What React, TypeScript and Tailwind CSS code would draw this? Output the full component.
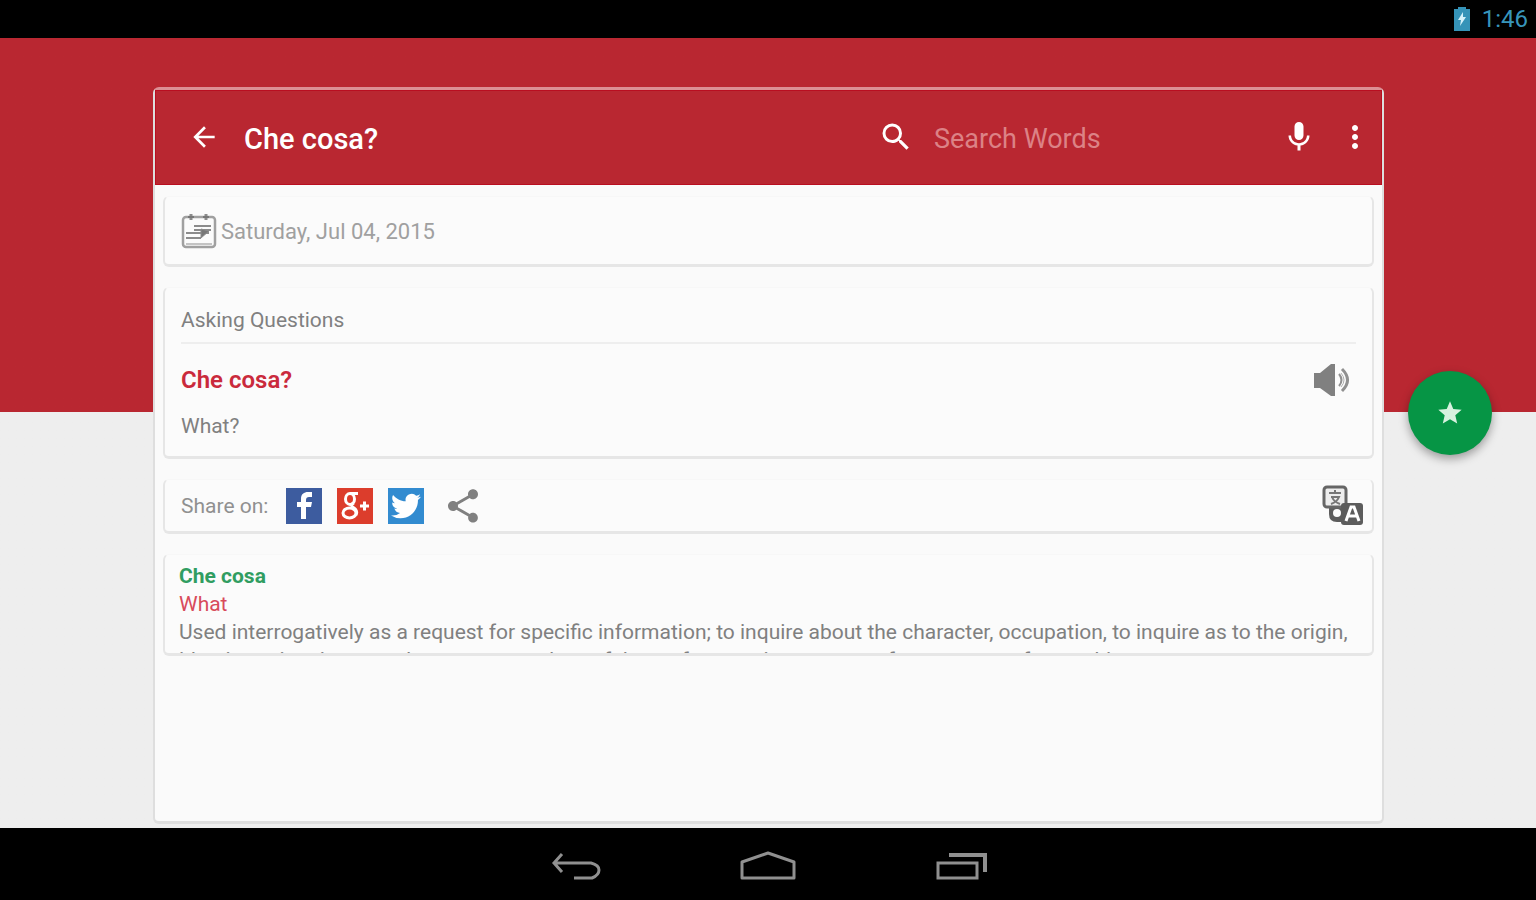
import React, { useState } from "react";
import { MdArrowBack, MdMic, MdMoreVert, MdSearch, MdShare, MdStar } from "react-icons/md";
import clsx from "clsx";

interface CardProps {
    className?: string;
    children: React.ReactNode;
}

function Card({ className, children }: CardProps) {
    return (
        <section
            className={clsx(
                "rounded-md border-x-2 border-b-3 border-[#e6e6e6] border-t border-t-[#f7f7f7] bg-[#fbfbfb]",
                className
            )}
        >
            {children}
        </section>
    );
}

function StatusBar() {
    return (
        <div className="flex h-[38px] shrink-0 items-center justify-end gap-3 bg-black pr-2">
            <svg viewBox="0 0 16 24" className="h-6 w-4">
                <path d="M4 0h8v2h4v22H0V2h4z" fill="#3593b8" />
                <path d="M9 5 4 13h3l-1 6 6-9H9z" fill="#d5f2fb" />
            </svg>
            <span className="text-2xl leading-6 text-[#3795bb]">1:46</span>
        </div>
    );
}

function CalendarIcon() {
    return (
        <svg viewBox="0 0 36 36" className="size-9" fill="none" stroke="#8b8b8b">
            <rect x="2" y="4" width="32" height="30" rx="3" strokeWidth="2.5" stroke="#a0a0a0" />
            <path d="M5 31h26" strokeWidth="2" stroke="#c4c4c4" />
            <path d="M10 1v6M25 1v6" strokeWidth="3" />
            <path d="M7 4h6M22 4h6" strokeWidth="2" stroke="#777" />
            <path d="M13 13h17M13 17h17M5 20h23M5 25h15" strokeWidth="2" />
            <path d="M20 16v9l8-7z" fill="#777" strokeWidth="1" />
        </svg>
    );
}

function SpeakerIcon() {
    return (
        <svg viewBox="0 0 38 34" className="h-[34px] w-[38px]" fill="none">
            <path d="M0 10h6L17 1h4v32h-4L6 25H0z" fill="#808080" />
            <path d="M25 11q5 6 0 12" stroke="#909090" strokeWidth="2" />
            <path d="M28 6q11 11 0 22" stroke="#909090" strokeWidth="3" />
            <path d="M27 10q6 7 0 14" stroke="#b0b0b0" strokeWidth="1" />
        </svg>
    );
}

function TranslateIcon() {
    return (
        <svg viewBox="0 0 42 42" className="size-[42px]" fill="none">
            <path d="M7 22v7q0 8 8 8h6V24h3v-2z" fill="#5c5c5c" />
            <circle cx="15" cy="28" r="4" fill="#fbfbfb" />
            <rect x="2" y="2" width="22" height="20" rx="3" fill="#ededed" stroke="#666" strokeWidth="3" />
            <path d="M7 8h12M13 5v3M9 12h8q-2 5-8 7M10 12q2 5 8 7" stroke="#777" strokeWidth="2" />
            <rect x="19" y="18" width="22" height="22" rx="3" fill="#5c5c5c" />
            <path d="m24 36 5-14h3l5 14M26 31h9" stroke="#fff" strokeWidth="3" />
        </svg>
    );
}

function FacebookIcon() {
    return (
        <svg viewBox="0 0 36 36" className="size-9">
            <path d="M0 0h36v36H0z" fill="#3d5c9f" />
            <path
                d="M15 31V19h-4v-5h4v-3c0-5 3-7 7-7h4v5h-3c-2 0-3 1-3 3v2h6l-1 5h-5v12z"
                fill="#fff"
            />
        </svg>
    );
}

function GooglePlusIcon() {
    return (
        <svg viewBox="0 0 36 36" className="size-9" fill="none" stroke="#fff">
            <path d="M0 0h36v36H0z" fill="#dc3d2c" stroke="none" />
            <ellipse cx="13" cy="11" rx="4.5" ry="5.5" strokeWidth="3" />
            <path d="M13 5.500h8M17 15q-5 2 0 5 4 3 2 7" strokeWidth="3" />
            <ellipse cx="12.5" cy="25" rx="6.5" ry="5" strokeWidth="3" />
            <path d="M23 18h9M27.500 13.500v9" strokeWidth="3" />
        </svg>
    );
}

function TwitterIcon() {
    return (
        <svg viewBox="0 0 36 36" className="size-9">
            <path d="M0 0h36v36H0z" fill="#328bd0" />
            <path
                transform="translate(3 3) scale(1.25)"
                d="M23.950 4.570a10 10 0 0 1-2.820.770 4.960 4.960 0 0 0 2.160-2.720c-.950.550-2 .960-3.130 1.180a4.920 4.920 0 0 0-8.380 4.480C7.690 8.090 4.070 6.130 1.640 3.160a4.820 4.820 0 0 0-.670 2.480c0 1.710.870 3.210 2.190 4.100a4.900 4.900 0 0 1-2.230-.620v.060a4.920 4.920 0 0 0 3.950 4.830 5 5 0 0 1-2.210.080 4.940 4.940 0 0 0 4.600 3.420A9.870 9.870 0 0 1 0 19.540a14 14 0 0 0 7.560 2.210c9.050 0 14-7.500 14-13.980l-.020-.640a9.940 9.940 0 0 0 2.410-2.560z"
                fill="#fff"
            />
        </svg>
    );
}

function NavBar() {
    return (
        <nav className="flex h-[72px] shrink-0 items-center justify-center gap-[138px] bg-black pt-1">
            <button type="button" aria-label="Back">
                <svg viewBox="0 0 56 32" className="h-8 w-14" fill="none" stroke="#909090" strokeWidth="3">
                    <path d="M16 4 8 13l8 9M8 13h37q8 2 8 7t-7 8H28" />
                </svg>
            </button>
            <button type="button" aria-label="Home">
                <svg viewBox="0 0 56 32" className="h-8 w-14" fill="none" stroke="#909090" strokeWidth="3">
                    <path d="M2 28V12L28 3l26 9v16z" strokeLinejoin="round" />
                </svg>
            </button>
            <button type="button" aria-label="Recent apps">
                <svg viewBox="0 0 56 32" className="h-8 w-14" fill="none" stroke="#909090" strokeWidth="4">
                    <path d="M4 13h39v15H4z" strokeWidth="3" />
                    <path d="M15 5h36v17" />
                </svg>
            </button>
        </nav>
    );
}

export default function App() {
    const [query, setQuery] = useState("");

    return (
        <div className="flex min-h-screen flex-col bg-black font-[Roboto,sans-serif] text-[#808080]">
            <StatusBar />
            <main className="grid flex-1 grid-cols-[153fr_1231fr_152fr] bg-linear-to-b from-[#b92731] from-[374px] to-[#eeeeee] to-[374px] pt-[49px] pb-1">
                <div />
                <article className="flex flex-col rounded-md border-2 border-t-3 border-b-3 border-[#dedede] border-t-[#dc8f94] bg-[#fafafa]">
                    <header className="flex h-[95px] items-center border border-[#b90e20] bg-[#b92731] pr-2 pb-0.5 pl-8 text-white">
                        <button type="button" aria-label="Navigate up">
                            <MdArrowBack className="size-8" />
                        </button>
                        <h1 className="ml-6 flex-1 pt-1 text-[29px] leading-9 font-medium">Che cosa?</h1>
                        <label htmlFor="search" aria-label="Search" className="mr-5">
                            <MdSearch className="size-9" />
                        </label>
                        <input
                            id="search"
                            type="text"
                            value={query}
                            onChange={(e) => setQuery(e.target.value)}
                            placeholder="Search Words"
                            className="w-[347px] bg-transparent pt-1 text-[27px] leading-9 outline-none placeholder:text-[#dc8286]"
                        />
                        <button type="button" aria-label="Voice search">
                            <MdMic className="size-9" />
                        </button>
                        <button type="button" aria-label="More options" className="ml-5">
                            <MdMoreVert className="size-9" />
                        </button>
                    </header>

                    <div className="flex flex-col gap-5 px-2 pt-[11px]">
                        <Card className="flex h-[71px] items-center gap-1 px-4">
                            <CalendarIcon />
                            <time dateTime="2015-07-04" className="pt-0.5 text-[22px] leading-7 text-[#a0a0a0]">
                                Saturday, Jul 04, 2015
                            </time>
                        </Card>

                        <Card className="px-4 pt-[18px] pb-4">
                            <h2 className="border-b-2 border-[#eeeeee] pb-2 text-[21px] leading-7">Asking Questions</h2>
                            <div className="mt-4 flex items-center justify-between pr-1">
                                <p className="text-2xl leading-10 font-semibold text-[#ca2a3c]">Che cosa?</p>
                                <button type="button" aria-label="Listen">
                                    <SpeakerIcon />
                                </button>
                            </div>
                            <p className="mt-3 text-[21px] leading-7">What?</p>
                        </Card>

                        <Card className="flex h-[55px] items-center pr-2 pl-4">
                            <span className="text-[21px] leading-7 text-[#909090]">Share on:</span>
                            <div className="ml-[18px] flex items-center gap-[15px]">
                                <button type="button" aria-label="Facebook">
                                    <FacebookIcon />
                                </button>
                                <button type="button" aria-label="Google Plus">
                                    <GooglePlusIcon />
                                </button>
                                <button type="button" aria-label="Twitter">
                                    <TwitterIcon />
                                </button>
                                <button type="button" aria-label="Share" className="ml-1">
                                    <MdShare className="size-10" />
                                </button>
                            </div>
                            <button type="button" aria-label="Translate" className="ml-auto">
                                <TranslateIcon />
                            </button>
                        </Card>

                        <Card className="h-[102px] overflow-hidden pt-[7px] pr-3 pl-[14px] text-[21px] leading-7">
                            <p className="font-bold text-[#309d61]">Che cosa</p>
                            <p className="text-[#d84b5b]">What</p>
                            <p>
                                Used interrogatively as a request for specific information; to inquire about the
                                character, occupation, to inquire as to the origin, identity, to inquire as to the
                                source, worth, usefulness, force, or importance of a person or of something
                            </p>
                        </Card>
                    </div>
                </article>
                <aside className="pt-[284px] pl-6">
                    <button
                        type="button"
                        aria-label="Add to favorites"
                        className="flex size-[84px] items-center justify-center rounded-full bg-[#069545] text-[#d7f2df] shadow-[0_4px_10px_rgba(0,0,0,0.35)]"
                    >
                        <MdStar className="size-7" />
                    </button>
                </aside>
            </main>
            <NavBar />
        </div>
    );
}
